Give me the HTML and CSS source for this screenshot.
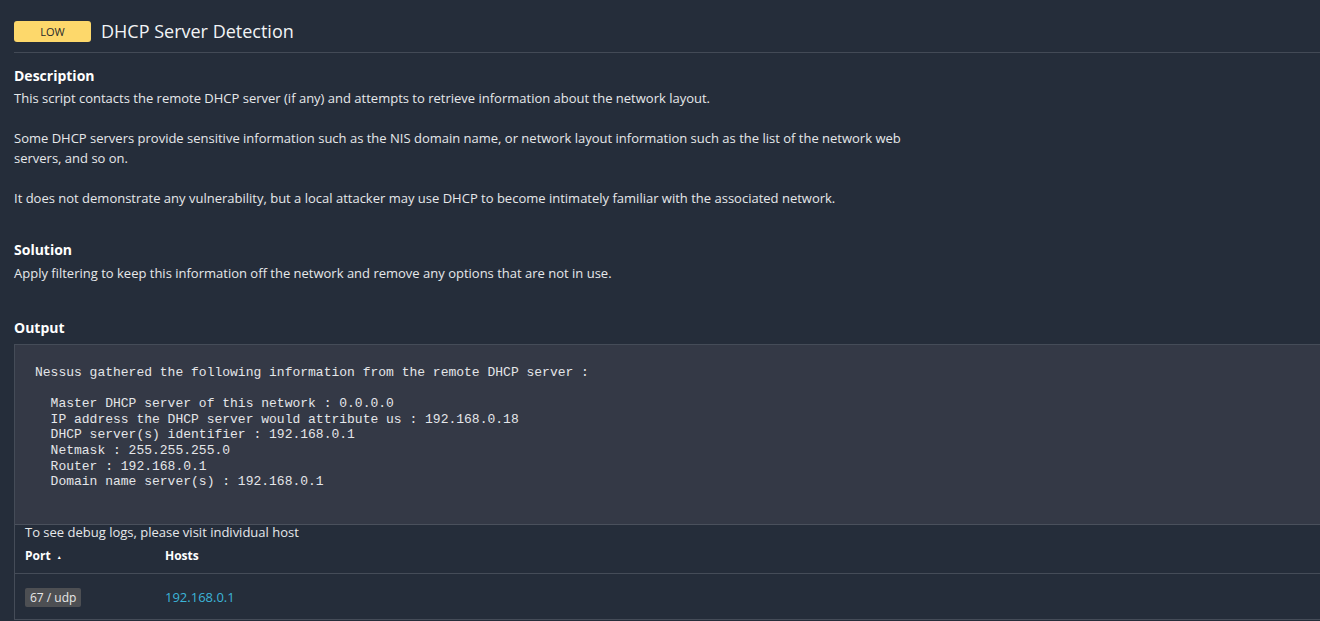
FILE: index.html
```html
<!DOCTYPE html>
<html>
<head>
<meta charset="utf-8">
<link rel="stylesheet" href="styles.css">
</head>
<body>
<div class="page">
  <header class="title-row">
    <span class="sev">LOW</span>
    <h1 class="title">DHCP Server Detection</h1>
  </header>
  <section class="block desc">
    <h2 class="heading">Description</h2>
    <p class="text">This script contacts the remote DHCP server (if any) and attempts to retrieve information about the network layout.</p>
    <p class="text">Some DHCP servers provide sensitive information such as the NIS domain name, or network layout information such as the list of the network web<br>servers, and so on.</p>
    <p class="text">It does not demonstrate any vulnerability, but a local attacker may use DHCP to become intimately familiar with the associated network.</p>
  </section>
  <section class="block sol">
    <h2 class="heading">Solution</h2>
    <p class="text">Apply filtering to keep this information off the network and remove any options that are not in use.</p>
  </section>
  <section class="block out">
    <h2 class="heading">Output</h2>
    <div class="output">
<pre class="pre">Nessus gathered the following information from the remote DHCP server :

  Master DHCP server of this network : 0.0.0.0
  IP address the DHCP server would attribute us : 192.168.0.18
  DHCP server(s) identifier : 192.168.0.1
  Netmask : 255.255.255.0
  Router : 192.168.0.1
  Domain name server(s) : 192.168.0.1</pre>
      <div class="hosts">
        <div class="debug">To see debug logs, please visit individual host</div>
        <div class="thead">
          <div class="col-port">Port <span class="arrow">&#9650;</span></div>
          <div class="col-hosts">Hosts</div>
        </div>
        <div class="trow">
          <div class="col-port"><span class="port">67 / udp</span></div>
          <div class="col-hosts"><a class="host" href="#">192.168.0.1</a></div>
        </div>
      </div>
    </div>
  </section>
</div>
</body>
</html>
```

FILE: styles.css
```css
html, body {
  margin: 0;
  padding: 0;
  background: #252d3a;
  overflow: hidden;
}
body {
  font-family: "Open Sans", "Noto Sans", sans-serif;
  color: #e8eaed;
}
.page {
  padding-left: 14px;
  width: 1320px;
}
.title-row {
  display: flex;
  align-items: center;
  gap: 10px;
  height: 53px;
  padding-top: 10px;
  padding-bottom: 0;
  box-sizing: border-box;
  border-bottom: 1px solid #434a56;
}
.sev {
  display: flex;
  align-items: center;
  justify-content: center;
  width: 77px;
  height: 21px;
  background: #fdd86b;
  color: #2a2a2a;
  border-radius: 3px;
  font-size: 11px;
}
.title {
  margin: 0;
  font-size: 18px;
  font-weight: 400;
  color: #f2f4f6;
  line-height: 22px;
}
.block { margin: 0; }
.heading {
  margin: 0;
  font-size: 14px;
  font-weight: 700;
  color: #ffffff;
  line-height: 20px;
}
.text {
  margin: 0 0 20px 0;
  font-size: 13px;
  line-height: 20px;
  color: #e6e8ea;
}
.desc { padding-top: 13px; }
.desc .heading { margin-bottom: 2px; }
.sol { padding-top: 12px; }
.sol .heading { margin-bottom: 3px; }
.out { padding-top: 15px; }
.out .heading { margin-bottom: 6px; }
.output {
  border-left: 1px solid #454c58;
  border-top: 1px solid #454c58;
}
.pre {
  margin: 0;
  background: #343946;
  padding: 20px 20px 34px 20px;
  font-family: "Liberation Mono", "Courier New", monospace;
  font-size: 13px;
  line-height: 15.6px;
  color: #e4e6e9;
  border-bottom: 1px solid #4a505c;
}
.hosts {
  padding-left: 10px;
}
.debug {
  font-size: 13px;
  line-height: 15px;
  color: #e6e8ea;
}
.thead, .trow {
  display: flex;
  align-items: center;
  margin-left: -10px;
  padding-left: 10px;
}
.thead {
  border-bottom: 1px solid #454c58;
  font-size: 12px;
  font-weight: 700;
  color: #ffffff;
  box-sizing: border-box;
  height: 34px;
  padding-bottom: 2px;
}
.trow {
  height: 45px;
  border-bottom: 1px solid #454c58;
}
.col-port { width: 140px; }
.arrow {
  font-size: 5px;
  vertical-align: middle;
  margin-left: 3px;
}
.port {
  display: inline-block;
  background: #4d4f53;
  color: #e8e8e8;
  font-size: 12px;
  line-height: 19px;
  padding: 0 5px;
  border-radius: 2px;
}
.host {
  color: #3cb4d8;
  text-decoration: none;
  font-size: 13px;
}
```
